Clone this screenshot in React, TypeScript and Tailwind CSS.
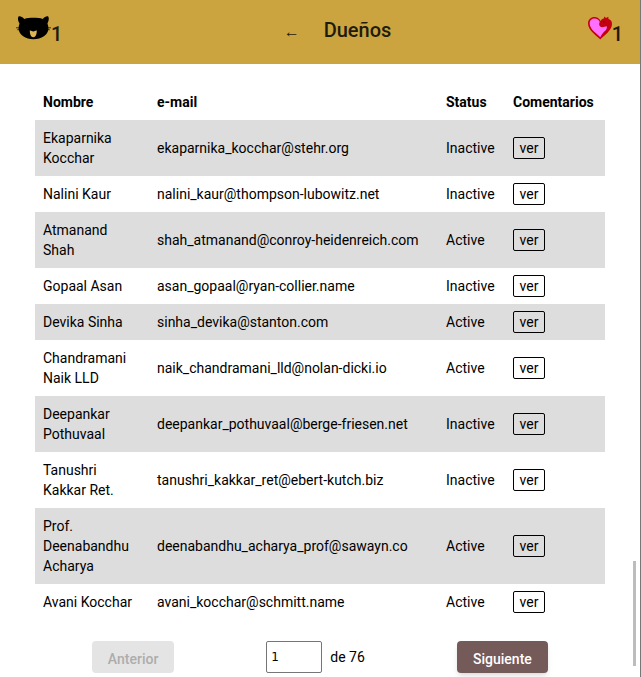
import { useState } from "react";

type Owner = { name: string; email: string; status: "Active" | "Inactive" };

const owners: Owner[] = [
  { name: "Ekaparnika Kocchar", email: "ekaparnika_kocchar@stehr.org", status: "Inactive" },
  { name: "Nalini Kaur", email: "nalini_kaur@thompson-lubowitz.net", status: "Inactive" },
  { name: "Atmanand Shah", email: "shah_atmanand@conroy-heidenreich.com", status: "Active" },
  { name: "Gopaal Asan", email: "asan_gopaal@ryan-collier.name", status: "Inactive" },
  { name: "Devika Sinha", email: "sinha_devika@stanton.com", status: "Active" },
  { name: "Chandramani Naik LLD", email: "naik_chandramani_lld@nolan-dicki.io", status: "Active" },
  { name: "Deepankar Pothuvaal", email: "deepankar_pothuvaal@berge-friesen.net", status: "Inactive" },
  { name: "Tanushri Kakkar Ret.", email: "tanushri_kakkar_ret@ebert-kutch.biz", status: "Inactive" },
  { name: "Prof. Deenabandhu Acharya", email: "deenabandhu_acharya_prof@sawayn.co", status: "Active" },
  { name: "Avani Kocchar", email: "avani_kocchar@schmitt.name", status: "Active" },
];

function CatIcon() {
  return (
    <svg viewBox="0 0 35 24" className="h-6 w-[35px]" aria-hidden="true">
      <path
        d="M2.500.5C3.800-.3 6.500.8 8.200 3C11 2 14 1.800 17.500 1.800C21 1.800 24 2 26.800 3C28.500.8 31-.3 32.200.5C33.300 2.200 32.700 5 31.400 7.500C32.200 9.500 32.500 11 32.400 13C32.200 18.800 25.500 23.200 17.500 23.200C9.500 23.200 3 18.800 2.600 13C2.500 11 2.800 9.500 3.500 7.500C2 5 1.500 2.200 2.500.5Z"
        fill="#000"
      />
      <path d="M0 11.800H4M1.200 13.800L4.500 13.400M35 11.800H31M33.800 13.800L30.500 13.400" stroke="#000" strokeWidth="0.7" />
      <path d="M13.800 14.500C15 14.200 16 15.300 17.300 15.500C18.600 15.300 19.600 14.200 20.800 14.500C20.800 18 19.800 21.200 17.300 21.200C14.800 21.200 13.800 18 13.800 14.500Z" fill="#dfb453" />
    </svg>
  );
}

function HeartIcon() {
  return (
    <svg viewBox="0 0 24 24" className="size-6" aria-hidden="true">
      <path
        d="M12.300 23.500C9 20 0 14.500 0 7.500C0 3.500 3 1 6.500 1C9 1 11.500 2.500 12.500 5C13.300 3.500 14.500 2.800 15.800 2.500L16.300.5L18 2L20.300.8L20.500 3C22.800 3.800 24 5.500 24 8C24 14.500 15.500 20 12.300 23.500Z"
        fill="#c4000f"
      />
      <path
        d="M12.300 21.200C9.500 18 1.700 13.500 1.700 7.500C1.700 4.300 4 2.500 6.500 2.500C9 2.500 11 4 11.800 6C10.700 7.500 11 9.800 12.500 10.800C14 11.500 16.500 11 18.700 10.300C19.300 12 18.500 13.500 17.500 14.500C15.500 16 13.500 18.500 12.300 21.200Z"
        fill="#ff70ff"
      />
      <circle cx="15.800" cy="6" r="0.700" fill="#5a0008" />
    </svg>
  );
}

export default function App() {
  const [page, setPage] = useState("1");

  return (
    <div className="h-screen overflow-hidden border-r border-[#777] bg-white font-[Roboto,sans-serif] text-sm text-black">
      <header className="grid h-16 grid-cols-[1fr_auto_1fr] items-center bg-[#cba440] pr-[17px] pl-4 text-xl font-medium text-[#1f1b0d]">
        <div className="flex items-end pb-2">
          <CatIcon />
          <span className="-mb-2">1</span>
        </div>
        <div className="flex items-center gap-6 pb-1 pl-9">
          <a href="#volver" aria-label="Volver" className="pt-1 text-base">
            ←
          </a>
          <h1>Dueños</h1>
        </div>
        <div className="flex items-end justify-end pb-2">
          <HeartIcon />
          <span className="-mb-2">1</span>
        </div>
      </header>

      <div className="relative">
        <main className="px-[35px] pt-5">
          <table className="w-full table-fixed border-collapse text-left">
            <thead>
              <tr className="h-9">
                <th className="w-[20%] px-2 font-bold">Nombre</th>
                <th className="px-2 font-bold">e-mail</th>
                <th className="w-[67px] px-2 font-bold">Status</th>
                <th className="w-[100px] px-2 font-bold">Comentarios</th>
              </tr>
            </thead>
            <tbody>
              {owners.map((owner) => (
                <tr key={owner.email} className="odd:bg-[#ddd]">
                  <td className="py-2 pr-4 pl-2">{owner.name}</td>
                  <td className="px-2">{owner.email}</td>
                  <td className="px-2">{owner.status}</td>
                  <td className="px-2">
                    <button type="button" className="block h-[22px] w-8 rounded-xs border border-black">
                      ver
                    </button>
                  </td>
                </tr>
              ))}
            </tbody>
          </table>

          <nav aria-label="Paginación" className="flex items-center justify-around px-[11px] pt-[21px]">
            <button type="button" disabled className="h-8 w-[82px] rounded-sm bg-[#e4e4e4] pt-1 font-medium text-[#adadad]">
              Anterior
            </button>
            <label className="flex items-center gap-2">
              <input
                aria-label="Página"
                value={page}
                onChange={(event) => setPage(event.target.value)}
                className="h-8 w-14 rounded-xs border border-[#767676] px-1 font-['DejaVu_Sans',sans-serif] text-xs"
              />
              de 76
            </label>
            <button type="button" className="h-8 w-[91px] rounded-sm bg-[#755a5a] pt-1 font-medium text-white shadow-md">
              Siguiente
            </button>
          </nav>
        </main>
        <div className="absolute right-1 bottom-[7px] h-[105px] w-[3px] bg-[#bdbdbd]" />
      </div>
    </div>
  );
}
